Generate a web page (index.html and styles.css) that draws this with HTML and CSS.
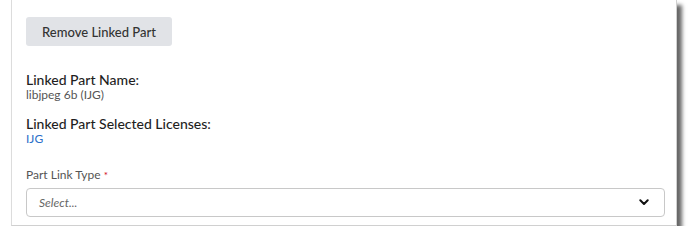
FILE: index.html
```html
<!DOCTYPE html>
<html>
<head>
<meta charset="utf-8">
<link rel="stylesheet" href="styles.css">
</head>
<body>
<div class="frame">
  <div class="panel">
    <button class="btn" type="button">Remove Linked Part</button>
    <div class="field">
      <div class="field-title">Linked Part Name:</div>
      <div class="field-value">libjpeg 6b (IJG)</div>
    </div>
    <div class="field">
      <div class="field-title">Linked Part Selected Licenses:</div>
      <div class="field-value link">IJG</div>
    </div>
    <div class="form-group">
      <label class="label">Part Link Type <span class="req">*</span></label>
      <div class="select">
        <span class="placeholder">Select...</span>
        <svg class="chevron" width="10" height="7" viewBox="0 0 10 7"><path d="M1.3 1.3 L5 5 L8.7 1.3" fill="none" stroke="#111" stroke-width="2" stroke-linecap="round" stroke-linejoin="round"/></svg>
      </div>
    </div>
  </div>
</div>
</body>
</html>
```
FILE: styles.css
```css
html, body {
  margin: 0;
  padding: 0;
  background: #fff;
}
body {
  font-family: Lato, "Liberation Sans", sans-serif;
  color: #333;
}
.frame {
  padding: 0 0 0 11px;
}
.panel {
  box-sizing: border-box;
  width: 666px;
  height: 226px;
  padding: 17px 0 0 14px;
  border-left: 1px solid #dcdcdc;
  border-right: 1px solid #d0d0d0;
  border-bottom: 1px solid #d0d0d0;
  box-shadow: 5px 5px 4px rgba(0, 0, 0, 0.6);
  background: #fff;
  display: flex;
  flex-direction: column;
  align-items: flex-start;
}
.btn {
  width: 146px;
  height: 29px;
  border: none;
  border-radius: 3px;
  background: #e1e3e7;
  color: #333;
  font-family: inherit;
  font-size: 13px;
  font-weight: 500;
  padding: 0;
  margin-bottom: 26px;
}
.field {
  margin-bottom: 14px;
}
.field-title {
  font-size: 14px;
  font-weight: 500;
  color: #1f1f1f;
  line-height: 16px;
}
.field-value {
  font-size: 12px;
  color: #555;
  line-height: 14px;
}
.field-value.link {
  color: #2a6fc9;
}
.form-group {
  width: 639px;
  margin-top: 8px;
}
.label {
  display: block;
  font-size: 12px;
  color: #555;
  line-height: 14px;
  margin-bottom: 6px;
}
.req {
  color: #d0021b;
  font-size: 10px;
  vertical-align: top;
}
.select {
  box-sizing: border-box;
  height: 29px;
  border: 1px solid #c8c8c8;
  border-radius: 4px;
  display: flex;
  align-items: center;
  justify-content: space-between;
  padding: 0 15px 0 12px;
}
.placeholder {
  font-size: 12px;
  font-style: italic;
  color: #666;
}
.chevron {
  display: block;
}
```
